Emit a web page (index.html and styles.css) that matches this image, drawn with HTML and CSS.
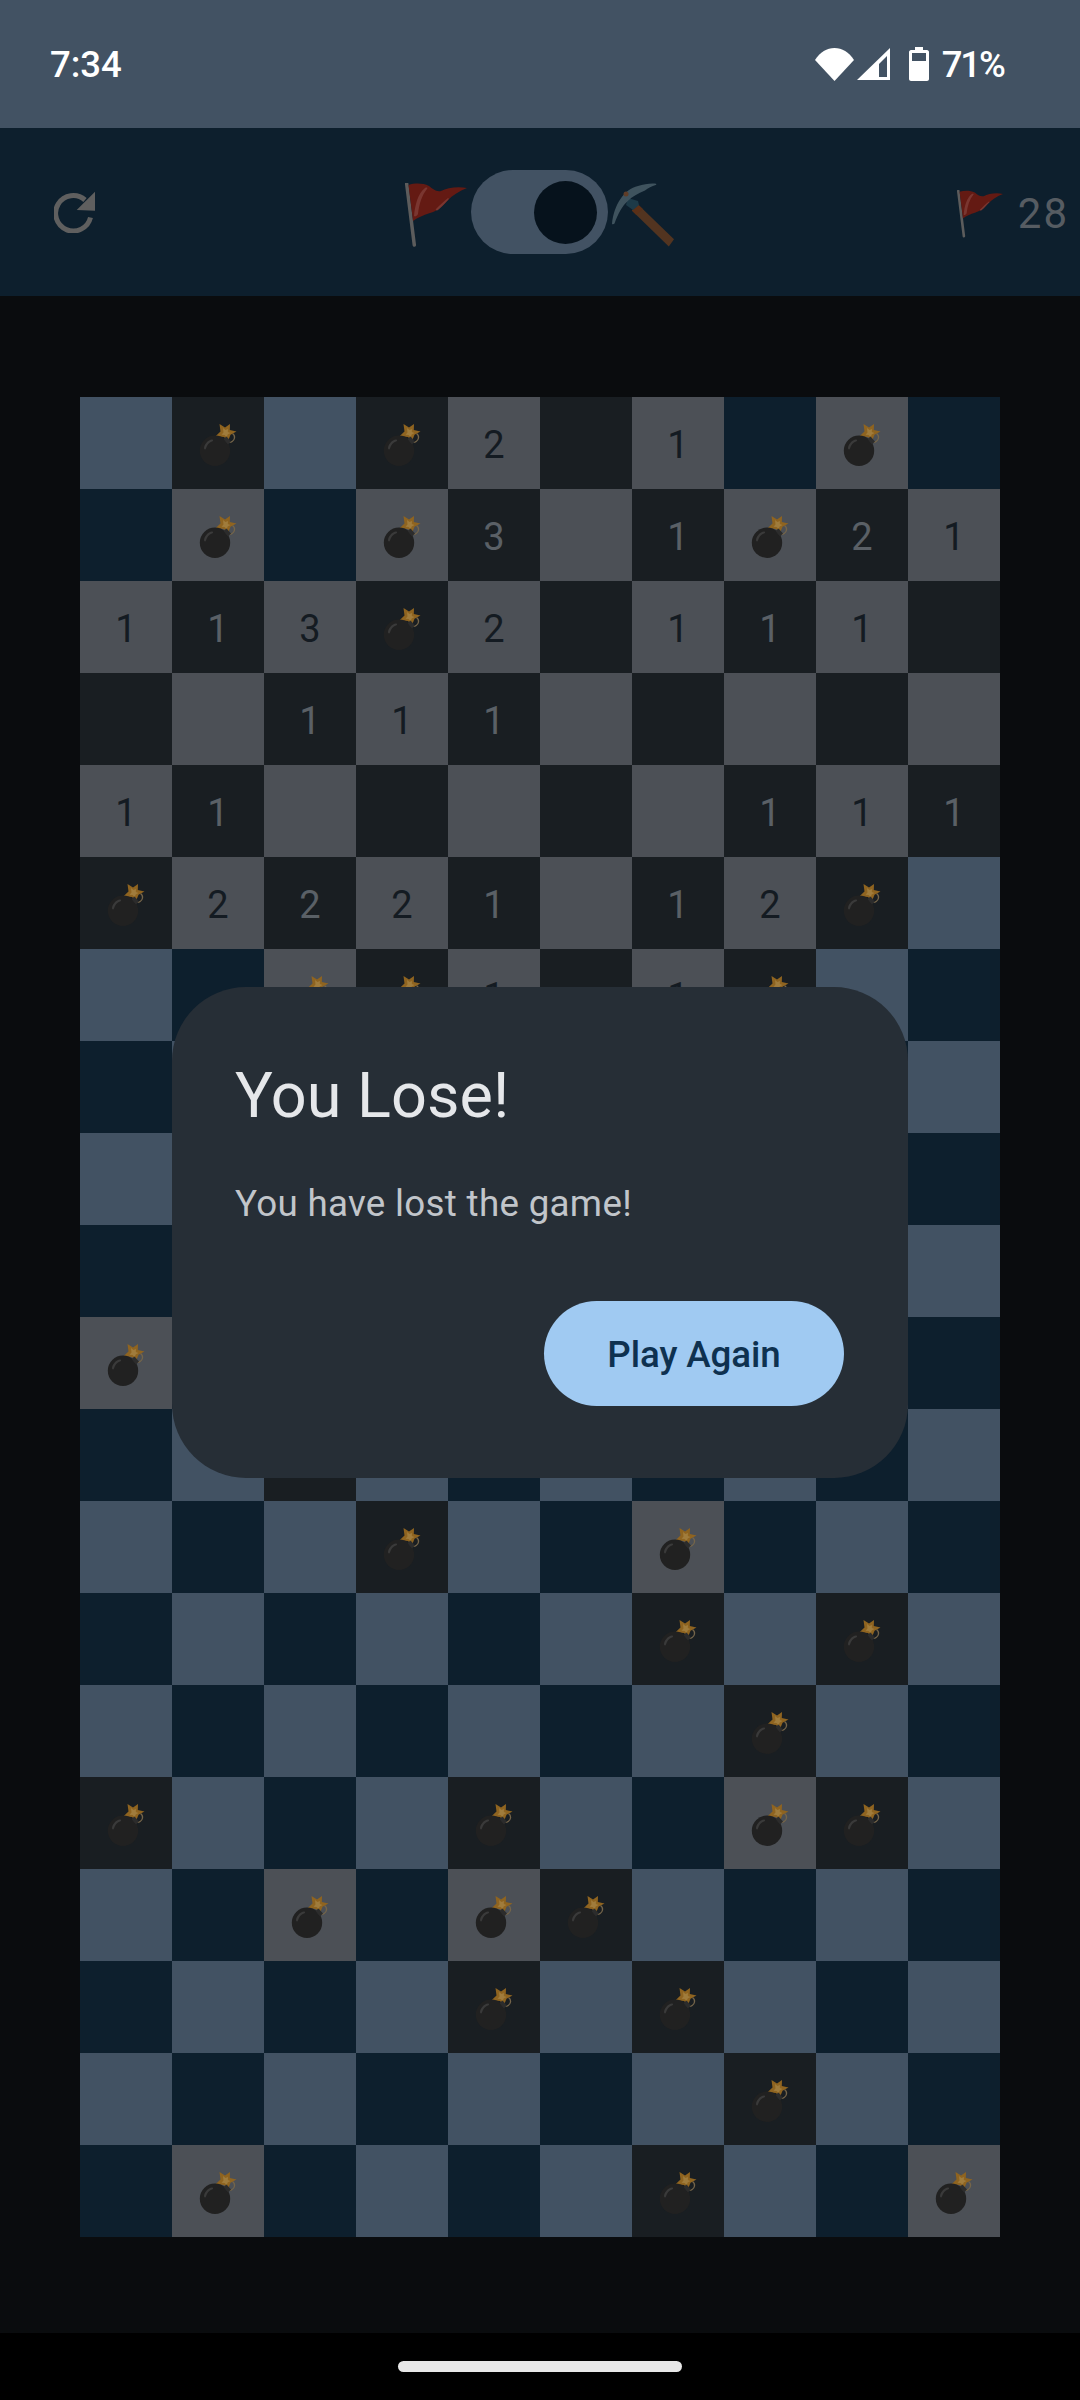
FILE: index.html
```html
<!DOCTYPE html>
<html lang="en">
<head>
    <meta charset="UTF-8">
    <meta name="viewport" content="width=device-width, initial-scale=1.0">
    <title>Minesweeper</title>
    <link rel="stylesheet" href="styles.css">
</head>
<body>

    <svg class="defs" width="0" height="0">
        <symbol id="bomb" viewBox="0 0 92 92">
            <path d="M56 45c3 1 6-1 6.500-4 .3-2-.5-3.500-2-4.500" fill="none" stroke="#75654a" stroke-width="1.300"/>
            <path d="M47.500 27l5.500 3.500 5-3.500-.2 6 6.700 1.500-6 3.200-2.500 6.300-4-4-8.500-.7 5-4.800z" fill="#8f6420"/>
            <path d="M51 31l2.500 2 2.500-1-.2 3 2.700 1-2.800 1.500-1 2.500-2.200-2-3-.3 2-2.200z" fill="#a07c3c"/>
            <circle cx="43" cy="53.700" r="15.200" fill="#212121"/>
            <path d="M51.500 42l3-2.500 4.500 5-3 3z" fill="#2c2c2c"/>
            <path d="M32 51c.5-4 4-8 8-8.500 1.500 0 1.500 1.500 0 2-3 1-5 3.500-6 7-.5 1.500-2 1-2-.5z" fill="#3a3a3a"/>
        </symbol>
        <symbol id="flag" viewBox="0 0 62 64">
            <path d="M1.700 1l7.600 61" fill="none" stroke="#5c5c5c" stroke-width="3.500" stroke-linecap="round"/>
            <path d="M3.500 2C10 0 18 0 24 3c4 3 7 6 12 5 6-3 16-5 26-3-8 3-14 7-20 13-6 6-10 10-17 12-7 2-13 5-17 8z" fill="#641a13"/>
            <path d="M9 33C10 22 13 10 20 5c2-1 3 0 2 1-5 6-8 15-9 25-1 2-3 3-4 2z" fill="#7a3630"/>
            <path d="M31 26c4-4 8-8 12-11 1 0 1 1 0 2-3 3-6 7-10 10-1 1-3 0-2-1z" fill="#7a3630"/>
        </symbol>
    </svg>

    <div class="status-bar">
        <span class="clock">7:34</span>
        <div class="status-icons">
            <svg class="wifi" viewBox="0 0 39 33"><path d="M0 12C5 4 12 0 19.500 0S34 4 39 12L19.500 33z" fill="#fff"/></svg>
            <svg class="signal" viewBox="0 0 33 32"><path d="M33 0v32H0zM30 8L22 16v13h8z" fill="#fff" fill-rule="evenodd"/></svg>
            <svg class="battery" viewBox="0 0 20 34"><path d="M6 0h8v3h4c1 0 2 1 2 2v27c0 1-1 2-2 2H2c-1 0-2-1-2-2V5c0-1 1-2 2-2h4zM3 6v8h14V6z" fill="#fff" fill-rule="evenodd"/></svg>
            <span class="battery-pct">71%</span>
        </div>
    </div>

    <header class="top-bar">
        <svg class="refresh" viewBox="0 0 42 42"><path d="M36.500 26.500A17.700 17.700 0 1 1 31 9" fill="none" stroke="#5f5f5f" stroke-width="5"/><path d="M41 .7v19l-18.300-.7z" fill="#5f5f5f"/></svg>
        <div class="mode-switch">
            <svg class="emoji"><use href="#flag"/></svg>
            <div class="toggle"><div class="thumb"></div></div>
            <svg class="emoji" viewBox="0 0 62 64">
                <path d="M26.300 21.700l35.700 34.500-5.200 7.300-37-36z" fill="#523420"/>
                <path d="M26.300 21.700l4.500 4.300-6.500 6-4.500-4.500z" fill="#5a3018"/>
                <path d="M16 15l10 3 1 4-6 5-7-5z" fill="#1d3a48"/>
                <path d="M0 40.700C2 22 12 6 26 3c6-2 13-3 18-2.300.6.300.3 1-.3 1.300C40 3 36 5 33 7.500 26 10 20 14 16.300 17.500 10 23 6 31 2.500 40.500c-.5 1-2.500 1-2.500.2z" fill="#3f535e"/>
                <circle cx="14" cy="11" r="2.500" fill="#5f3d28"/>
            </svg>
        </div>
        <div class="flag-count">
            <svg class="flag-small"><use href="#flag"/></svg>
            <span>28</span>
        </div>
    </header>

    <main class="game">
        <div class="board">
            <div class="row">
                <div class="cell"></div>
                <div class="cell open"><svg class="bomb"><use href="#bomb"/></svg></div>
                <div class="cell"></div>
                <div class="cell open"><svg class="bomb"><use href="#bomb"/></svg></div>
                <div class="cell open">2</div>
                <div class="cell open"></div>
                <div class="cell open">1</div>
                <div class="cell"></div>
                <div class="cell open"><svg class="bomb"><use href="#bomb"/></svg></div>
                <div class="cell"></div>
            </div>
            <div class="row">
                <div class="cell"></div>
                <div class="cell open"><svg class="bomb"><use href="#bomb"/></svg></div>
                <div class="cell"></div>
                <div class="cell open"><svg class="bomb"><use href="#bomb"/></svg></div>
                <div class="cell open">3</div>
                <div class="cell open"></div>
                <div class="cell open">1</div>
                <div class="cell open"><svg class="bomb"><use href="#bomb"/></svg></div>
                <div class="cell open">2</div>
                <div class="cell open">1</div>
            </div>
            <div class="row">
                <div class="cell open">1</div>
                <div class="cell open">1</div>
                <div class="cell open">3</div>
                <div class="cell open"><svg class="bomb"><use href="#bomb"/></svg></div>
                <div class="cell open">2</div>
                <div class="cell open"></div>
                <div class="cell open">1</div>
                <div class="cell open">1</div>
                <div class="cell open">1</div>
                <div class="cell open"></div>
            </div>
            <div class="row">
                <div class="cell open"></div>
                <div class="cell open"></div>
                <div class="cell open">1</div>
                <div class="cell open">1</div>
                <div class="cell open">1</div>
                <div class="cell open"></div>
                <div class="cell open"></div>
                <div class="cell open"></div>
                <div class="cell open"></div>
                <div class="cell open"></div>
            </div>
            <div class="row">
                <div class="cell open">1</div>
                <div class="cell open">1</div>
                <div class="cell open"></div>
                <div class="cell open"></div>
                <div class="cell open"></div>
                <div class="cell open"></div>
                <div class="cell open"></div>
                <div class="cell open">1</div>
                <div class="cell open">1</div>
                <div class="cell open">1</div>
            </div>
            <div class="row">
                <div class="cell open"><svg class="bomb"><use href="#bomb"/></svg></div>
                <div class="cell open">2</div>
                <div class="cell open">2</div>
                <div class="cell open">2</div>
                <div class="cell open">1</div>
                <div class="cell open"></div>
                <div class="cell open">1</div>
                <div class="cell open">2</div>
                <div class="cell open"><svg class="bomb"><use href="#bomb"/></svg></div>
                <div class="cell"></div>
            </div>
            <div class="row">
                <div class="cell"></div>
                <div class="cell"></div>
                <div class="cell open"><svg class="bomb"><use href="#bomb"/></svg></div>
                <div class="cell open"><svg class="bomb"><use href="#bomb"/></svg></div>
                <div class="cell open">1</div>
                <div class="cell open"></div>
                <div class="cell open">1</div>
                <div class="cell open"><svg class="bomb"><use href="#bomb"/></svg></div>
                <div class="cell"></div>
                <div class="cell"></div>
            </div>
            <div class="row">
                <div class="cell"></div><div class="cell"></div><div class="cell"></div><div class="cell"></div><div class="cell"></div>
                <div class="cell"></div><div class="cell"></div><div class="cell"></div><div class="cell"></div><div class="cell"></div>
            </div>
            <div class="row">
                <div class="cell"></div><div class="cell"></div><div class="cell"></div><div class="cell"></div><div class="cell"></div>
                <div class="cell"></div><div class="cell"></div><div class="cell"></div><div class="cell"></div><div class="cell"></div>
            </div>
            <div class="row">
                <div class="cell"></div><div class="cell"></div><div class="cell"></div><div class="cell"></div><div class="cell"></div>
                <div class="cell"></div><div class="cell"></div><div class="cell"></div><div class="cell"></div><div class="cell"></div>
            </div>
            <div class="row">
                <div class="cell open"><svg class="bomb"><use href="#bomb"/></svg></div>
                <div class="cell"></div><div class="cell"></div><div class="cell"></div><div class="cell"></div>
                <div class="cell"></div><div class="cell"></div><div class="cell"></div><div class="cell"></div><div class="cell"></div>
            </div>
            <div class="row">
                <div class="cell"></div>
                <div class="cell"></div>
                <div class="cell open"></div>
                <div class="cell"></div><div class="cell"></div><div class="cell"></div><div class="cell"></div>
                <div class="cell"></div><div class="cell"></div><div class="cell"></div>
            </div>
            <div class="row">
                <div class="cell"></div><div class="cell"></div><div class="cell"></div>
                <div class="cell open"><svg class="bomb"><use href="#bomb"/></svg></div>
                <div class="cell"></div><div class="cell"></div>
                <div class="cell open"><svg class="bomb"><use href="#bomb"/></svg></div>
                <div class="cell"></div><div class="cell"></div><div class="cell"></div>
            </div>
            <div class="row">
                <div class="cell"></div><div class="cell"></div><div class="cell"></div><div class="cell"></div><div class="cell"></div><div class="cell"></div>
                <div class="cell open"><svg class="bomb"><use href="#bomb"/></svg></div>
                <div class="cell"></div>
                <div class="cell open"><svg class="bomb"><use href="#bomb"/></svg></div>
                <div class="cell"></div>
            </div>
            <div class="row">
                <div class="cell"></div><div class="cell"></div><div class="cell"></div><div class="cell"></div><div class="cell"></div><div class="cell"></div><div class="cell"></div>
                <div class="cell open"><svg class="bomb"><use href="#bomb"/></svg></div>
                <div class="cell"></div><div class="cell"></div>
            </div>
            <div class="row">
                <div class="cell open"><svg class="bomb"><use href="#bomb"/></svg></div>
                <div class="cell"></div><div class="cell"></div><div class="cell"></div>
                <div class="cell open"><svg class="bomb"><use href="#bomb"/></svg></div>
                <div class="cell"></div><div class="cell"></div>
                <div class="cell open"><svg class="bomb"><use href="#bomb"/></svg></div>
                <div class="cell open"><svg class="bomb"><use href="#bomb"/></svg></div>
                <div class="cell"></div>
            </div>
            <div class="row">
                <div class="cell"></div><div class="cell"></div>
                <div class="cell open"><svg class="bomb"><use href="#bomb"/></svg></div>
                <div class="cell"></div>
                <div class="cell open"><svg class="bomb"><use href="#bomb"/></svg></div>
                <div class="cell open"><svg class="bomb"><use href="#bomb"/></svg></div>
                <div class="cell"></div><div class="cell"></div><div class="cell"></div><div class="cell"></div>
            </div>
            <div class="row">
                <div class="cell"></div><div class="cell"></div><div class="cell"></div><div class="cell"></div>
                <div class="cell open"><svg class="bomb"><use href="#bomb"/></svg></div>
                <div class="cell"></div>
                <div class="cell open"><svg class="bomb"><use href="#bomb"/></svg></div>
                <div class="cell"></div><div class="cell"></div><div class="cell"></div>
            </div>
            <div class="row">
                <div class="cell"></div><div class="cell"></div><div class="cell"></div><div class="cell"></div><div class="cell"></div><div class="cell"></div><div class="cell"></div>
                <div class="cell open"><svg class="bomb"><use href="#bomb"/></svg></div>
                <div class="cell"></div><div class="cell"></div>
            </div>
            <div class="row">
                <div class="cell"></div>
                <div class="cell open"><svg class="bomb"><use href="#bomb"/></svg></div>
                <div class="cell"></div><div class="cell"></div><div class="cell"></div><div class="cell"></div>
                <div class="cell open"><svg class="bomb"><use href="#bomb"/></svg></div>
                <div class="cell"></div><div class="cell"></div>
                <div class="cell open"><svg class="bomb"><use href="#bomb"/></svg></div>
            </div>
        </div>
    </main>

    <div class="nav-bar"><div class="home-pill"></div></div>

    <div class="overlay">
        <div class="dialog">
            <h2 class="dialog-title">You Lose!</h2>
            <p class="dialog-text">You have lost the game!</p>
            <div class="dialog-actions">
                <button type="button" class="play-btn">Play Again</button>
            </div>
        </div>
    </div>

</body>
</html>
```

FILE: styles.css
```css
html, body {
    margin: 0;
    padding: 0;
}
body {
    position: relative;
    display: flex;
    flex-direction: column;
    width: 1080px;
    height: 2400px;
    overflow: hidden;
    font-family: Roboto, "Noto Sans", sans-serif;
    background-color: #000;
}
.defs {
    position: absolute;
}

/* status bar */
.status-bar {
    display: flex;
    align-items: center;
    justify-content: space-between;
    height: 128px;
    padding: 0 76px 0 50px;
    box-sizing: border-box;
    background-color: #425263;
    color: #fff;
    font-size: 36.5px;
    font-weight: 500;
}
.status-icons {
    display: flex;
    align-items: center;
}
.battery-pct {
    letter-spacing: -2px;
}
.wifi {
    width: 39px;
    height: 33px;
    margin-right: 3px;
}
.signal {
    width: 33px;
    height: 32px;
    margin-right: 19px;
}
.battery {
    width: 20px;
    height: 34px;
    margin-right: 13px;
}

/* top bar */
.top-bar {
    display: flex;
    align-items: center;
    justify-content: space-between;
    height: 168px;
    padding: 0 11px 0 54px;
    box-sizing: border-box;
    background-color: #0d1f2d;
}
.refresh {
    width: 42px;
    height: 42px;
}
.mode-switch {
    display: flex;
    align-items: center;
    gap: 4px;
    margin-left: 27px;
}
.emoji {
    width: 62px;
    height: 64px;
    margin-top: 6px;
}
.toggle {
    display: flex;
    align-items: center;
    justify-content: flex-end;
    width: 137px;
    height: 84px;
    padding-right: 11px;
    box-sizing: border-box;
    border-radius: 42px;
    background-color: #425263;
}
.thumb {
    width: 63px;
    height: 63px;
    border-radius: 50%;
    background-color: #06121c;
}
.flag-count {
    display: flex;
    align-items: center;
    gap: 15px;
    padding-top: 3px;
    color: #565c62;
    font-size: 42px;
    letter-spacing: 2px;
}
.flag-small {
    width: 46px;
    height: 48px;
}

/* board */
.game {
    flex: 1;
    padding: 101px 80px 0;
    background-color: #0a0c0e;
}
.board {
    display: flex;
    flex-direction: column;
}
.row {
    display: flex;
}
.cell {
    display: flex;
    align-items: center;
    justify-content: center;
    width: 92px;
    height: 92px;
    padding-top: 3px;
    box-sizing: border-box;
    background-color: #0d1f2d;
    color: #5a6066;
    font-size: 38px;
}
.row:nth-child(odd) .cell:nth-child(odd),
.row:nth-child(even) .cell:nth-child(even) {
    background-color: #425263;
}
.cell.open {
    background-color: #191e22;
}
.row:nth-child(odd) .cell.open:nth-child(odd),
.row:nth-child(even) .cell.open:nth-child(even) {
    background-color: #4c5056;
    color: #141b22;
}
.bomb {
    width: 92px;
    height: 92px;
    flex: none;
    margin-top: -3px;
}

/* bottom nav */
.nav-bar {
    display: flex;
    justify-content: center;
    align-items: center;
    height: 67px;
    background-color: #000;
}
.home-pill {
    width: 284px;
    height: 11px;
    border-radius: 6px;
    background-color: #e8e8e8;
}

/* dialog */
.overlay {
    position: absolute;
    top: 128px;
    right: 0;
    bottom: 64px;
    left: 0;
    display: flex;
    align-items: center;
    justify-content: center;
}
.dialog {
    width: 736px;
    height: 491px;
    padding: 67px 64px 72px 63px;
    box-sizing: border-box;
    display: flex;
    flex-direction: column;
    border-radius: 74px;
    background-color: #262e36;
}
.dialog-title {
    margin: 0;
    color: #e5e7ea;
    font-size: 63px;
    font-weight: 400;
    line-height: 84px;
}
.dialog-text {
    margin: 39px 0 0;
    color: #c1c5ca;
    font-size: 36.75px;
    line-height: 53px;
    letter-spacing: 0.3px;
}
.dialog-actions {
    display: flex;
    justify-content: flex-end;
    margin-top: auto;
}
.play-btn {
    width: 300px;
    height: 105px;
    padding: 3px 0 0;
    border: none;
    border-radius: 53px;
    background-color: #a0caf2;
    color: #0e3150;
    font-family: inherit;
    font-size: 36.75px;
    font-weight: 500;
    letter-spacing: -0.1px;
    cursor: pointer;
}
```
